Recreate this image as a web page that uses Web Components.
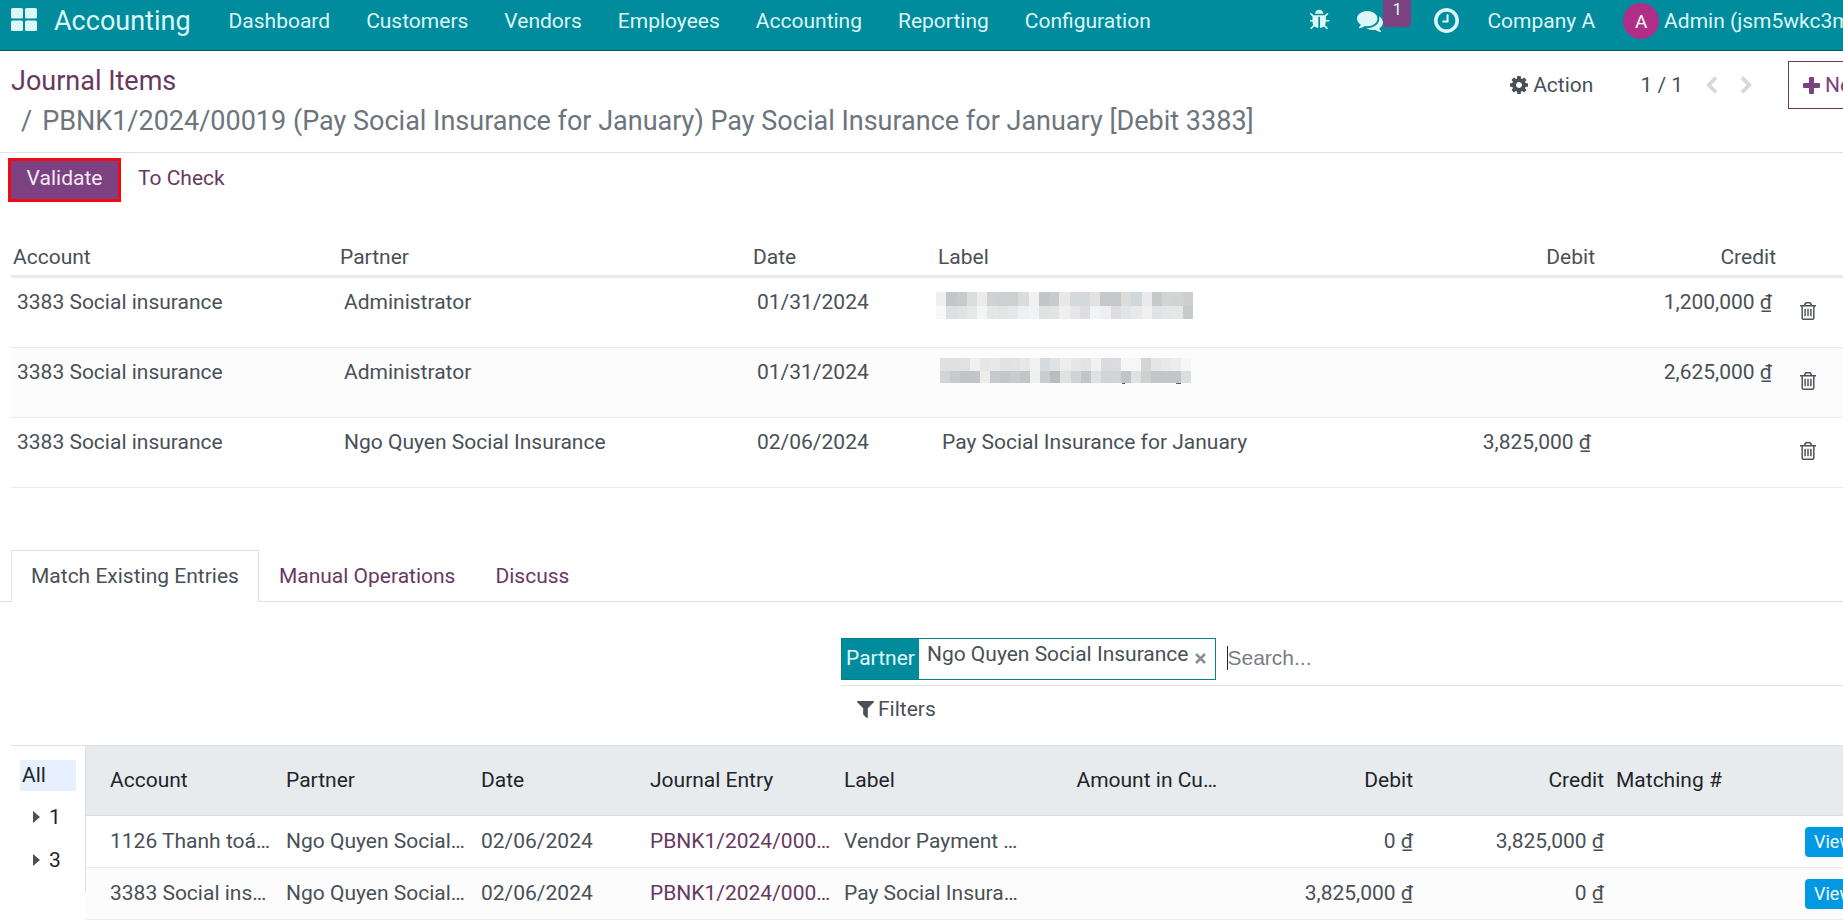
<!DOCTYPE html>
<html lang="en">
<head>
<meta charset="utf-8">
<title>Journal Items</title>
<style>
html, body { margin: 0; }
body {
  overflow: hidden;
  min-height: 100vh;
  background: #fff;
  color: #495057;
  font: 21px/30px Roboto, "Noto Sans", sans-serif;
  --brand: #008c9c;
  --purple: #68395f;
  --primary: #7c4180;
  --line: #dee2e6;
  --soft: #e8ebee;
}
</style>
</head>
<body>
<accounting-app></accounting-app>
<script>
const ICONS = {
  apps: ['0 0 26 23', '<rect width="12" height="10.500" rx="1.500"/><rect x="14" width="12" height="10.500" rx="1.500"/><rect y="12.500" width="12" height="10.500" rx="1.500"/><rect x="14" y="12.500" width="12" height="10.500" rx="1.500"/>'],
  bug: ['128 0 1536 1792', '<path d="M1632 960q0 26-19 45t-45 19h-224q0 171-67 290l208 209q19 19 19 45t-19 45q-18 19-45 19t-45-19l-198-197q-5 5-15 13t-42 28.500-65 36.500-82 29-97 13v-896h-128v896q-51 0-101.500-13.500t-87-33-66-39-43.500-32.500l-15-14-183 207q-20 21-48 21-24 0-43-16-19-18-20.500-44.500t15.500-46.500l202-227q-58-114-58-274h-224q-26 0-45-19t-19-45 19-45 45-19h224v-294l-173-173q-19-19-19-45t19-45 45-19 45 19l173 173h844l173-173q19-19 45-19t45 19 19 45-19 45l-173 173v294h224q26 0 45 19t19 45zm-480-576h-640q0-133 93.500-226.500t226.500-93.500 226.500 93.500 93.500 226.500z"/>'],
  comments: ['0 256 1792 1408', '<path d="M1408 768q0 139-94 257t-256.500 186.500-353.500 68.500q-86 0-176-16-124 88-278 128-36 9-86 16h-3q-11 0-20.500-8t-11.500-21q-1-3-1-6.500t.5-6.500 2-6l2.500-5 3.500-5.500 4-5 4.500-5 4-4.500q5-6 23-25t26-29.500 22.500-29 25-38.500 20.500-44q-124-72-195-177t-71-224q0-139 94-257t256.500-186.500 353.500-68.500 353.500 68.500 256.500 186.500 94 257zm384 256q0 120-71 224.500t-195 176.500q10 24 20.500 44t25 38.500 22.500 29 26 29.500 23 25q1 1 4 4.500t4.500 5 4 5 3.500 5.500l2.500 5 2 6 .5 6.500-1 6.500q-3 14-13 22t-22 7q-50-7-86-16-154-40-278-128-90 16-176 16-271 0-472-132 58 4 88 4 161 0 309-45t264-129q125-92 192-212t67-254q0-77-23-152 129 71 204 178t75 230z"/>'],
  clock: ['128 128 1536 1536', '<path d="M1024 544v448q0 14-9 23t-23 9h-320q-14 0-23-9t-9-23v-64q0-14 9-23t23-9h224v-352q0-14 9-23t23-9h64q14 0 23 9t9 23zm416 352q0-148-73-273t-198-198-273-73-273 73-198 198-73 273 73 273 198 198 273 73 273-73 198-198 73-273zm224 0q0 209-103 385.500t-279.500 279.500-385.500 103-385.500-103-279.500-279.500-103-385.500 103-385.500 279.500-279.500 385.500-103 385.500 103 279.500 279.500 103 385.500z"/>'],
  cog: ['0 128 1536 1536', '<path d="M1024 896q0-106-75-181t-181-75-181 75-75 181 75 181 181 75 181-75 75-181zm512-109v222q0 12-8 23t-20 13l-185 28q-19 54-39 91 35 50 107 138 10 12 10 25t-9 23q-27 37-99 108t-94 71q-12 0-26-9l-138-108q-44 23-91 38-16 136-29 186-7 28-36 28h-222q-14 0-24.500-8.500t-11.500-21.500l-28-184q-49-16-90-37l-141 107q-10 9-25 9-14 0-25-11-126-114-165-168-7-10-7-23 0-12 8-23 15-21 51-66.500t54-70.500q-27-50-41-99l-183-27q-13-2-21-12.500t-8-23.500v-222q0-12 8-23t19-13l186-28q14-46 39-92-40-57-107-138-10-12-10-24 0-10 9-23 26-36 98.500-107.500t94.500-71.500q13 0 26 10l138 107q44-23 91-38 16-136 29-186 7-28 36-28h222q14 0 24.500 8.500t11.500 21.500l28 184q49 16 90 37l142-107q9-9 24-9 13 0 25 10 129 119 165 170 7 8 7 22 0 12-8 23-15 21-51 66.500t-54 70.500q26 50 41 98l183 28q13 2 21 12.500t8 23.500z"/>'],
  left: ['0 0 12 18', '<path d="M10 1.500 2.800 9l7.200 7.500" fill="none" stroke="currentColor" stroke-width="3.800"/>'],
  right: ['0 0 12 18', '<path d="M2 1.500 9.200 9l-7.200 7.500" fill="none" stroke="currentColor" stroke-width="3.800"/>'],
  plus: ['0 0 17 17', '<path d="M7 0h3a1 1 0 0 1 1 1v5h5a1 1 0 0 1 1 1v3a1 1 0 0 1-1 1h-5v5a1 1 0 0 1-1 1H7a1 1 0 0 1-1-1v-5H1a1 1 0 0 1-1-1V7a1 1 0 0 1 1-1h5V1a1 1 0 0 1 1-1z"/>'],
  trash: ['192 128 1408 1536', '<path d="M704 736v576q0 14-9 23t-23 9h-64q-14 0-23-9t-9-23v-576q0-14 9-23t23-9h64q14 0 23 9t9 23zm256 0v576q0 14-9 23t-23 9h-64q-14 0-23-9t-9-23v-576q0-14 9-23t23-9h64q14 0 23 9t9 23zm256 0v576q0 14-9 23t-23 9h-64q-14 0-23-9t-9-23v-576q0-14 9-23t23-9h64q14 0 23 9t9 23zm128 724v-948h-896v948q0 22 7 40.500t14.500 27 10.500 8.500h832q3 0 10.500-8.500t14.500-27 7-40.500zm-672-1076h448l-48-117q-7-9-17-11h-317q-10 2-17 11zm928 32v64q0 14-9 23t-23 9h-96v948q0 83-47 143.500t-113 60.500h-832q-66 0-113-58.500t-47-141.500v-952h-96q-14 0-23-9t-9-23v-64q0-14 9-23t23-9h309l70-167q15-37 54-63t79-26h320q40 0 79 26t54 63l70 167h309q14 0 23 9t9 23z"/>'],
  filter: ['0 0 1408 1408', '<path d="M1403 39q17 41-14 70l-493 493v742q0 42-39 59-13 5-25 5-27 0-45-19l-256-256q-19-19-19-45v-486l-493-493q-31-29-14-70 17-39 59-39h1280q42 0 59 39z"/>'],
  close: ['0 0 11 11', '<path d="m1 1 9 9M10 1l-9 9" fill="none" stroke="currentColor" stroke-width="2.600"/>'],
  caret: ['0 0 7 12', '<path d="M0 0v12l7-6z"/>']
};

const RESET = `
  * { box-sizing: border-box; }
  button, input { font: inherit; color: inherit; background: none; border: 0; margin: 0; padding: 0; }
  button { cursor: pointer; white-space: nowrap; }
  a { color: inherit; text-decoration: none; white-space: nowrap; }
`;

function define(name, css, html) {
  const template = document.createElement('template');
  template.innerHTML = `<style>${RESET}${css}</style>${html}`;
  customElements.define(name, class extends HTMLElement {
    constructor() {
      super();
      this.attachShadow({ mode: 'open' }).append(template.content.cloneNode(true));
    }
  });
}

customElements.define('app-icon', class extends HTMLElement {
  connectedCallback() {
    if (this.shadowRoot) return;
    const [box, shape] = ICONS[this.getAttribute('name')];
    this.attachShadow({ mode: 'open' }).innerHTML =
      `<style>:host { display: inline-block; flex: none; } svg { display: block; width: 100%; height: 100%; fill: currentColor; }</style>
       <svg viewBox="${box}" preserveAspectRatio="none" aria-hidden="true">${shape}</svg>`;
  }
});

/* Pixelated strip that hides a private label: two rows of colour blocks. */
const MASKS = {
  a: {
    width: 257, height: 27, split: 14, marks: '',
    rows: ['f0efee c0c6c9 c8cbcd dcdddd ebebec cdd2d5 cdcfd0 cdd0d1 dadcdd f1f1f1 c2c6c8 c8cacb e8e8e7 d5d9db d3d8db e2e2e2 c6c9cb c5c9cc dcdcdb d0d8db e9e9e9 c6c9ca d2d4d5 d2d3d4 cdcecf',
           'f8f8f7 dbe0e2 e0e3e4 e8e8e8 f4f4f4 e4e7e7 e4e4e5 e6e7e8 f0f0f0 f2f3f4 e1e2e3 e2e3e3 efefef e6e6e6 dcdee1 f2f3f4 efefee dcdde0 e3e4e6 e7e9ea f0f0f0 e1e2e3 e5e5e5 e5e7e7 c8caca']
  },
  b: {
    width: 251, height: 26, split: 13,
    marks: '<path d="M182 25h3v1h-3zM236 25h5v1h-5z" fill="#5a6064"/>',
    rows: ['dfe0e0 dfe0e1 e0e1e2 f0f0f0 e6e6e5 e6e8e9 e0e2e4 e1e3e5 e6e7e8 f1f1f0 d8dbdd dfe1e2 eceeee e7e7e7 e0e4e5 f1f1f1 d9dcde dadcdd f6f6f6 f6f6f6 d3d6d8 e4e4e4 e8e9e9 ececec f6f6f6',
           'd3d4d5 c8cacb c0c5c8 c3c6c8 ececeb c8c9c8 c3c7c9 c8cccd c4c5c6 eff0f0 c9cccf b9bcbf e1e1e1 cfd4d6 c1c6c9 e0e1e3 d2d3d4 d2d4d6 c0c5c8 e0e1e0 cfd0d0 c1c6ca c2c6c9 c3c5c6 dcdfe0']
  }
};
customElements.define('masked-label', class extends HTMLElement {
  connectedCallback() {
    if (this.shadowRoot) return;
    const m = MASKS[this.getAttribute('kind')];
    const bottom = m.marks ? m.height - 1 : m.height;
    const rects = m.rows.map((row, r) => {
      const cells = row.split(' ');
      const w = m.width / cells.length;
      return cells.map((c, i) => `<rect x="${Math.round(i * w)}" y="${r ? m.split : 0}" width="11" height="${r ? bottom - m.split : m.split}" fill="#${c}"/>`).join('');
    }).join('');
    this.attachShadow({ mode: 'open' }).innerHTML =
      `<style>:host { display: block; } svg { display: block; }</style>
       <svg width="${m.width}" height="${m.height}" role="img" aria-label="Hidden label" shape-rendering="crispEdges">${rects}${m.marks}</svg>`;
  }
});

define('nav-bar', `
  :host { display: flex; align-items: flex-start; height: 51px; padding: 0 33px 0 11px; background: var(--brand); border-bottom: 1px solid #0a5560; color: #dcf7f8; }
  nav, .tray { display: flex; }
  nav { align-items: center; height: 42px; }
  .apps { display: flex; width: 26px; height: 23px; margin: 0 17px 4px 0; }
  .apps app-icon { width: 26px; height: 23px; }
  .brand { font-size: 27px; margin-right: 38px; }
  .menu { display: flex; gap: 36px; }
  .tray { margin-left: auto; height: 42px; align-items: center; }
  .bug { width: 20px; height: 22px; margin-bottom: 2px; }
  .chat { display: flex; margin-left: 27px; }
  .comments { width: 26px; height: 21px; }
  .badge { width: 28px; height: 27px; margin-bottom: 16px; border-radius: 0 0 4px 4px; background: #7c4180; font-size: 17px; line-height: 18px; text-align: center; }
  .clock { width: 25px; height: 25px; margin: 0 28px 2px 23px; }
  .user { display: flex; align-items: center; gap: 5px; margin-left: 28px; }
  .avatar { width: 36px; height: 36px; border-radius: 50%; background: #b12e86; color: #fff; font-size: 19px; line-height: 37px; text-align: center; }
`, `
  <nav>
    <a class="apps" href="#" aria-label="Apps"><app-icon name="apps"></app-icon></a>
    <a class="brand" href="#">Accounting</a>
    <div class="menu">
      <a href="#">Dashboard</a><a href="#">Customers</a><a href="#">Vendors</a><a href="#">Employees</a><a href="#">Accounting</a><a href="#">Reporting</a><a href="#">Configuration</a>
    </div>
  </nav>
  <div class="tray">
    <app-icon class="bug" name="bug"></app-icon>
    <a class="chat" href="#" aria-label="Messages"><app-icon class="comments" name="comments"></app-icon></a>
    <span class="badge">1</span>
    <app-icon class="clock" name="clock"></app-icon>
    <a href="#">Company A</a>
    <a class="user" href="#"><span class="avatar">A</span><span>Admin (jsm5wkc3m)</span></a>
  </div>
`);

define('control-panel', `
  :host { display: flex; align-items: flex-start; justify-content: space-between; padding: 10px 11px; height: 102px; border-bottom: 1px solid var(--line); }
  .crumbs { font-size: 27px; line-height: 40px; color: #6c757d; white-space: nowrap; }
  .crumbs a { display: block; color: var(--purple); }
  .crumbs span { margin: 0 10px; }
  .tools { display: flex; align-items: center; height: 48px; }
  .action { display: flex; align-items: center; gap: 5px; }
  .action app-icon { width: 18px; height: 18px; }
  .pager { margin: 0 23px 0 47px; }
  .step { display: flex; width: 12px; height: 18px; color: #d5d9de; }
  .step app-icon { width: 12px; height: 18px; }
  .step + .step { margin: 0 36px 0 22px; }
  .new { display: flex; align-items: center; gap: 5px; height: 48px; padding: 0 12px 0 14px; border: 1px solid var(--purple); color: var(--primary); }
  .new app-icon { width: 17px; height: 17px; }
`, `
  <div class="crumbs"><a href="#">Journal Items</a><span>/</span>PBNK1/2024/00019 (Pay Social Insurance for January) Pay Social Insurance for January [Debit 3383]</div>
  <div class="tools">
    <button class="action"><app-icon name="cog"></app-icon>Action</button>
    <span class="pager">1 / 1</span>
    <button class="step" aria-label="Previous"><app-icon name="left"></app-icon></button>
    <button class="step" aria-label="Next"><app-icon name="right"></app-icon></button>
    <button class="new"><app-icon name="plus"></app-icon>New</button>
  </div>
`);

define('status-bar', `
  :host { display: flex; gap: 17px; padding: 5px 8px 0; }
  button { height: 44px; padding-bottom: 4px; color: var(--purple); }
  .primary { width: 113px; border: 3px solid #f00a12; background: var(--primary); color: #f3e9f3; }
`, `<button class="primary">Validate</button><button>To Check</button>`);

define('journal-lines', `
  :host { display: block; padding: 0 11px; }
  table { width: 100%; border-collapse: separate; border-spacing: 0; table-layout: fixed; white-space: nowrap; }
  th { height: 40px; padding: 0 2px; font-weight: 400; text-align: left; border-bottom: 3px solid var(--soft); }
  td { height: 70px; padding: 9px 6px; vertical-align: top; border-bottom: 1px solid var(--soft); }
  tr:nth-child(even) td { background: #fcfcfc; }
  .num { text-align: right; }
  td.mask { padding: 14px 0 0; }
  td.mask.low { padding: 10px 4px 0; }
  td.bin { padding: 24px 22px 0; }
  .bin button { display: flex; }
  .bin app-icon { width: 16px; height: 18px; }
  .c1 { width: 327px; } .c2 { width: 413px; } .c3 { width: 185px; } .c5 { width: 200px; } .c6 { width: 181px; } .c7 { width: 102px; }
`, `
  <table>
    <colgroup><col class="c1"><col class="c2"><col class="c3"><col><col class="c5"><col class="c6"><col class="c7"></colgroup>
    <thead><tr><th>Account</th><th>Partner</th><th>Date</th><th>Label</th><th class="num">Debit</th><th class="num">Credit</th><th></th></tr></thead>
    <tbody>
      <tr><td>3383 Social insurance</td><td>Administrator</td><td>01/31/2024</td><td class="mask"><masked-label kind="a"></masked-label></td><td></td><td class="num">1,200,000 ₫</td><td class="bin"><button aria-label="Delete"><app-icon name="trash"></app-icon></button></td></tr>
      <tr><td>3383 Social insurance</td><td>Administrator</td><td>01/31/2024</td><td class="mask low"><masked-label kind="b"></masked-label></td><td></td><td class="num">2,625,000 ₫</td><td class="bin"><button aria-label="Delete"><app-icon name="trash"></app-icon></button></td></tr>
      <tr><td>3383 Social insurance</td><td>Ngo Quyen Social Insurance</td><td>02/06/2024</td><td>Pay Social Insurance for January</td><td class="num">3,825,000 ₫</td><td></td><td class="bin"><button aria-label="Delete"><app-icon name="trash"></app-icon></button></td></tr>
    </tbody>
  </table>
`);

define('note-tabs', `
  :host { display: flex; padding: 0 11px; border-bottom: 1px solid var(--line); color: var(--purple); }
  button { height: 51px; padding: 0 20px; }
  .active { height: 52px; padding: 0 19px 2px; margin-bottom: -1px; border: 1px solid var(--line); border-bottom: 0; background: #fff; color: #495057; }
`, `<button class="active" aria-current="page">Match Existing Entries</button><button>Manual Operations</button><button>Discuss</button>`);

define('partner-search', `
  :host { display: block; }
  .bar { display: flex; align-items: flex-start; gap: 11px; height: 48px; border-bottom: 1px solid var(--line); }
  .facet { display: flex; height: 42px; border: 1px solid #0b7f88; }
  .facet b { font-weight: 400; background: var(--brand); color: #e0fbfb; padding: 4px 4px 0; }
  .facet span { padding: 0 6px 0 8px; white-space: nowrap; }
  .facet button { display: flex; padding: 14px 9px 0 0; color: #8b8f93; }
  .facet app-icon { width: 11px; height: 11px; }
  input { flex: 1; height: 24px; margin-top: 8px; border-left: 1px solid #212529; outline: 0; font-family: "Liberation Sans", Arial, sans-serif; }
  input::placeholder { color: #777e85; opacity: 1; }
  .filters { display: flex; align-items: center; gap: 4px; padding: 8px 16px; }
  .filters app-icon { width: 17px; height: 17px; }
`, `
  <div class="bar">
    <div class="facet"><b>Partner</b><span>Ngo Quyen Social Insurance</span><button aria-label="Remove"><app-icon name="close"></app-icon></button></div>
    <input type="text" placeholder="Search..." aria-label="Search">
  </div>
  <button class="filters"><app-icon name="filter"></app-icon>Filters</button>
`);

define('entries-list', `
  :host { display: flex; align-items: flex-start; border-top: 1px solid var(--line); }
  aside { flex: none; width: 75px; height: 146px; padding: 14px 9px; border-right: 1px solid var(--line); color: #212529; }
  aside button { display: flex; align-items: center; gap: 9px; height: 31px; width: 100%; padding: 0 13px 2px; margin-bottom: 12px; }
  aside .all { padding: 0 2px 2px; margin-bottom: 11px; background: #e6f0ff; }
  aside app-icon { width: 7px; height: 12px; color: #495057; }
  table { flex: 1; min-width: 0; border-collapse: separate; border-spacing: 0; table-layout: fixed; white-space: nowrap; }
  th { height: 70px; padding: 0 5px 2px; font-weight: 400; text-align: left; color: #212529; background: #e8ebee; border-bottom: 1px solid #dadfe3; }
  td { height: 52px; padding: 0 5px 2px; border-bottom: 1px solid #e8eaec; }
  th:first-child, td:first-child { padding-left: 24px; }
  th:nth-child(9) { padding-left: 7px; }
  td:last-child { padding-bottom: 0; }
  tr:nth-child(even) td { background: #fcfcfc; }
  .num { text-align: right; }
  td a { color: var(--purple); }
  td button { display: block; height: 30px; padding: 0 9px; border-radius: 4px; background: #0398e3; color: #f0faff; font-size: 18px; }
  .c1 { width: 195px; } .c2 { width: 195px; } .c3 { width: 169px; } .c4 { width: 194px; } .c6 { width: 150px; } .c7 { width: 196px; } .c8, .c9 { width: 191px; } .c10 { width: 80px; }
`, `
  <aside><button class="all">All</button><button><app-icon name="caret"></app-icon>1</button><button><app-icon name="caret"></app-icon>3</button></aside>
  <table>
    <colgroup><col class="c1"><col class="c2"><col class="c3"><col class="c4"><col><col class="c6"><col class="c7"><col class="c8"><col class="c9"><col class="c10"></colgroup>
    <thead><tr><th>Account</th><th>Partner</th><th>Date</th><th>Journal Entry</th><th>Label</th><th class="num">Amount in Cu…</th><th class="num">Debit</th><th class="num">Credit</th><th>Matching #</th><th></th></tr></thead>
    <tbody>
      <tr><td>1126 Thanh toá…</td><td>Ngo Quyen Social…</td><td>02/06/2024</td><td><a href="#">PBNK1/2024/000…</a></td><td>Vendor Payment …</td><td></td><td class="num">0 ₫</td><td class="num">3,825,000 ₫</td><td></td><td><button>View</button></td></tr>
      <tr><td>3383 Social ins…</td><td>Ngo Quyen Social…</td><td>02/06/2024</td><td><a href="#">PBNK1/2024/000…</a></td><td>Pay Social Insura…</td><td></td><td class="num">3,825,000 ₫</td><td class="num">0 ₫</td><td></td><td><button>View</button></td></tr>
    </tbody>
  </table>
`);

/* The sheet is a little wider than the window, whose edge cuts it on the right. */
define('accounting-app', `
  :host { display: block; width: calc(100% + 48px); }
  journal-lines { margin-top: 36px; }
  note-tabs { margin-top: 62px; }
  partner-search { margin: 36px 0 13px 841px; }
  entries-list { margin: 0 11px; }
`, `
  <nav-bar></nav-bar>
  <control-panel></control-panel>
  <status-bar></status-bar>
  <journal-lines></journal-lines>
  <note-tabs></note-tabs>
  <partner-search></partner-search>
  <entries-list></entries-list>
`);
</script>
</body>
</html>
